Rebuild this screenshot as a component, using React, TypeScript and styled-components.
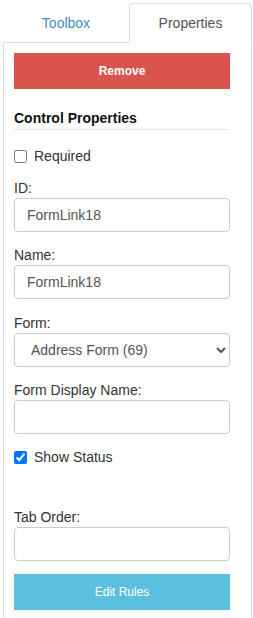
import React from "react";
import styled, { createGlobalStyle } from "styled-components";

const GlobalStyle = createGlobalStyle`
  body {
    margin: 0;
    background: #fff;
    font-family: "Liberation Sans", Arial, sans-serif;
    font-size: 14px;
    color: #333;
  }
  * {
    box-sizing: border-box;
  }
`;

const Page = styled.div`
  width: 249px;
  margin: 3px 0 0 3px;
`;

const TabBar = styled.div`
  display: grid;
  grid-template-columns: 126px 1fr;
  border-bottom: 1px solid #ddd;
`;

const Tab = styled.div<{ $active?: boolean }>`
  height: 40px;
  margin-bottom: -1px;
  display: flex;
  align-items: center;
  justify-content: center;
  font-size: 14px;
  color: ${(p) => (p.$active ? "#555" : "#428bca")};
  background: ${(p) => (p.$active ? "#fff" : "transparent")};
  border: 1px solid ${(p) => (p.$active ? "#ddd" : "transparent")};
  border-bottom-color: ${(p) => (p.$active ? "#fff" : "transparent")};
  border-radius: 4px 4px 0 0;
  cursor: pointer;
`;

const Panel = styled.div`
  display: flex;
  flex-direction: column;
  border-left: 1px solid #ddd;
  border-right: 1px solid #ddd;
  padding: 10px 21px 10px 10px;
`;

const Button = styled.button<{ $variant: "danger" | "info"; $top?: number }>`
  height: 36px;
  width: 100%;
  margin-top: ${(p) => p.$top ?? 0}px;
  border: none;
  border-radius: 0;
  color: #fff;
  font-family: "Liberation Sans", Arial, sans-serif;
  font-size: 12px;
  font-weight: ${(p) => (p.$variant === "danger" ? 700 : 400)};
  background: ${(p) => (p.$variant === "danger" ? "#d9534f" : "#5bc0de")};
  cursor: pointer;
`;

const Heading = styled.h4`
  margin: 19px 0 0;
  font-size: 14px;
  font-weight: 700;
  line-height: 20px;
  color: #111;
  padding-bottom: 1px;
  border-bottom: 1px solid #e5e5e5;
`;

const CheckRow = styled.label<{ $top: number }>`
  display: flex;
  align-items: center;
  gap: 7px;
  height: 20px;
  margin-top: ${(p) => p.$top}px;
  font-size: 14px;
  color: #333;

  input {
    width: 13px;
    height: 13px;
    margin: 0;
  }
`;

const Field = styled.div<{ $top: number }>`
  margin-top: ${(p) => p.$top}px;
`;

const Label = styled.label`
  display: block;
  line-height: 20px;
  font-size: 14px;
  color: #333;
`;

const TextInput = styled.input`
  display: block;
  width: 100%;
  height: 34px;
  padding: 6px 12px;
  border: 1px solid #ccc;
  border-radius: 4px;
  font-family: "Liberation Sans", Arial, sans-serif;
  font-size: 14px;
  color: #555;
  background: #fff;
`;

const Select = styled.select`
  display: block;
  width: 100%;
  height: 34px;
  padding: 6px 8px 6px 12px;
  border: 1px solid #ccc;
  border-radius: 4px;
  font-family: "Liberation Sans", Arial, sans-serif;
  font-size: 14px;
  color: #555;
  background: #fff;
`;

export default function App() {
  return (
    <Page>
      <GlobalStyle />
      <TabBar>
        <Tab>Toolbox</Tab>
        <Tab $active>Properties</Tab>
      </TabBar>
      <Panel>
        <Button $variant="danger">Remove</Button>
        <Heading>Control Properties</Heading>
        <CheckRow $top={16}>
          <input type="checkbox" />
          Required
        </CheckRow>
        <Field $top={12}>
          <Label>ID:</Label>
          <TextInput defaultValue="FormLink18" />
        </Field>
        <Field $top={13}>
          <Label>Name:</Label>
          <TextInput defaultValue="FormLink18" />
        </Field>
        <Field $top={14}>
          <Label>Form:</Label>
          <Select defaultValue="69">
            <option value="69">Address Form (69)</option>
          </Select>
        </Field>
        <Field $top={13}>
          <Label>Form Display Name:</Label>
          <TextInput />
        </Field>
        <CheckRow $top={13}>
          <input type="checkbox" defaultChecked />
          Show Status
        </CheckRow>
        <Field $top={40}>
          <Label>Tab Order:</Label>
          <TextInput />
        </Field>
        <Button $variant="info" $top={13}>
          Edit Rules
        </Button>
      </Panel>
    </Page>
  );
}
